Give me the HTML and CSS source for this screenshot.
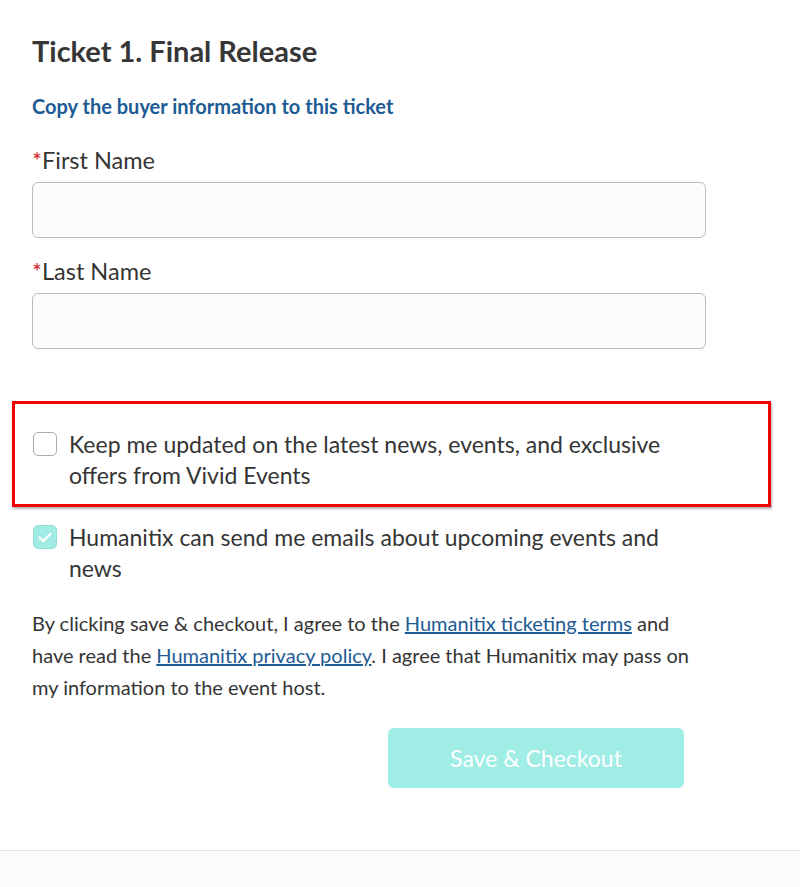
FILE: index.html
```html
<!DOCTYPE html>
<html lang="en">
<head>
<meta charset="UTF-8" />
<meta name="viewport" content="width=device-width, initial-scale=1" />
<title>Ticket details</title>
<link rel="stylesheet" href="styles.css">
</head>
<body>
  <div class="page">
    <section class="ticket" aria-label="Ticket 1">
      <h1>Ticket 1. Final Release</h1>
      <a class="copy-link" href="#">Copy the buyer information to this ticket</a>

      <div class="field">
        <label for="firstName"><span class="req">*</span>First Name</label>
        <input type="text" id="firstName" name="firstName" />
      </div>
      <div class="field">
        <label for="lastName"><span class="req">*</span>Last Name</label>
        <input type="text" id="lastName" name="lastName" />
      </div>

      <div class="highlight">
        <label class="check">
          <span class="box"></span>
          <span class="check-text">Keep me updated on the latest news, events, and exclusive offers from Vivid Events</span>
        </label>
      </div>

      <label class="check check-second">
        <span class="box checked">
          <svg width="14" height="11" viewBox="0 0 14 11"><path d="M1.5 5.5l3.7 3.6L12.5 1.8" fill="none" stroke="#fff" stroke-width="2.2" stroke-linecap="round" stroke-linejoin="round"/></svg>
        </span>
        <span class="check-text">Humanitix can send me emails about upcoming events and news</span>
      </label>

      <p class="terms">By clicking save &amp; checkout, I agree to the <a href="#">Humanitix ticketing terms</a> and have read the <a href="#">Humanitix privacy policy</a>. I agree that Humanitix may pass on my information to the event host.</p>

      <div class="actions">
        <button type="button" class="save-btn" disabled>Save &amp; Checkout</button>
      </div>
    </section>
    <div class="footer-rule"></div>
  </div>
</body>
</html>
```

FILE: styles.css
```css
*, *::before, *::after {
  box-sizing: border-box;
}
html, body {
  margin: 0;
  background: #fcfcfc;
}
body {
  font-family: Lato, "Open Sans", sans-serif;
  color: #353535;
}
.page {
  min-height: 887px;
}
.ticket {
  background: #fff;
  padding: 31px 94px 62px 32px;
}
h1 {
  margin: 0;
  font-size: 29px;
  font-weight: 700;
  line-height: 40px;
  color: #363636;
}
.copy-link {
  display: block;
  margin-top: 22px;
  font-size: 20px;
  font-weight: 700;
  color: #1d5b94;
  text-decoration: none;
  line-height: 26px;
}
.field {
  margin-top: 26px;
}
.field + .field {
  margin-top: 18px;
}
.field label {
  display: block;
  font-size: 23.5px;
  line-height: 30px;
  margin-bottom: 7px;
}
.req {
  color: #d0242b;
}
.field input {
  display: block;
  width: 100%;
  height: 56px;
  border: 1px solid #b9bbbf;
  border-radius: 6px;
  background: #fcfcfc;
  font: inherit;
  padding: 0 14px;
}
.highlight {
  margin: 52px -65px 0 -20px;
  border: 3px solid #f10000;
  padding: 25px 79px 13px 17px;
  box-shadow: 1px 2px 2px rgba(0, 0, 0, 0.3);
}
.check {
  display: flex;
  align-items: flex-start;
  gap: 12px;
  font-size: 23px;
  line-height: 31px;
  cursor: pointer;
}
.check-second {
  margin-top: 15px;
}
.box {
  flex: none;
  width: 24px;
  height: 24px;
  margin-top: 3px;
  margin-left: 1px;
  border: 1px solid #a8abb1;
  border-radius: 5px;
  background: #fff;
  display: flex;
  align-items: center;
  justify-content: center;
}
.box.checked {
  background: #a0ebe4;
  border-color: #93ddd6;
}
.check-text {
  padding-right: 20px;
}
.terms {
  margin: 23px 0 0;
  font-size: 20px;
  line-height: 32px;
}
.terms a {
  color: #1d5b94;
}
.actions {
  display: flex;
  justify-content: flex-end;
  margin-top: 25px;
  padding-right: 22px;
}
.save-btn {
  width: 296px;
  height: 60px;
  border: none;
  border-radius: 6px;
  background: #a0ede6;
  color: #fff;
  font-family: inherit;
  font-size: 23px;
}
.footer-rule {
  height: 1px;
  background: #e3e4e8;
  box-shadow: 0 2px 6px rgba(0, 0, 0, 0.05);
}
```
